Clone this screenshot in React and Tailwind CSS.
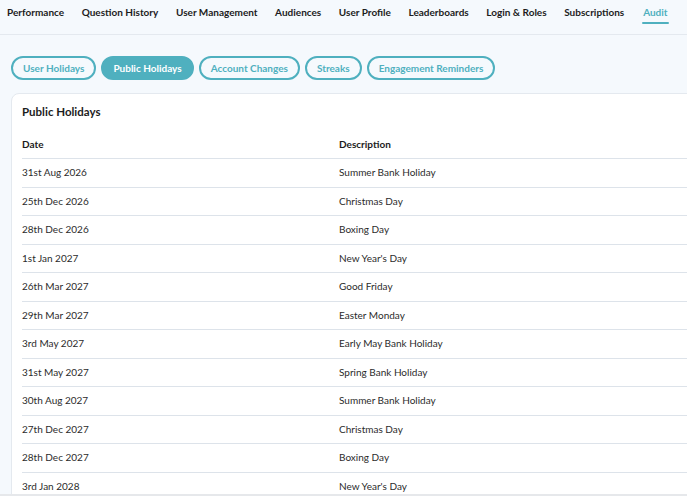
import React from 'react';

const NAV = [
  'Performance',
  'Question History',
  'User Management',
  'Audiences',
  'User Profile',
  'Leaderboards',
  'Login & Roles',
  'Subscriptions',
  'Audit',
];

const TABS = ['User Holidays', 'Public Holidays', 'Account Changes', 'Streaks', 'Engagement Reminders'];

const HOLIDAYS = [
  ['31st Aug 2026', 'Summer Bank Holiday'],
  ['25th Dec 2026', 'Christmas Day'],
  ['28th Dec 2026', 'Boxing Day'],
  ['1st Jan 2027', "New Year's Day"],
  ['26th Mar 2027', 'Good Friday'],
  ['29th Mar 2027', 'Easter Monday'],
  ['3rd May 2027', 'Early May Bank Holiday'],
  ['31st May 2027', 'Spring Bank Holiday'],
  ['30th Aug 2027', 'Summer Bank Holiday'],
  ['27th Dec 2027', 'Christmas Day'],
  ['28th Dec 2027', 'Boxing Day'],
  ['3rd Jan 2028', "New Year's Day"],
];

export default function App() {
  return (
    <div
      className="w-[687px] h-[496px] overflow-hidden bg-[#f5f9fd] text-[#222]"
      style={{ fontFamily: 'Lato, "Noto Sans", sans-serif' }}
    >
      {/* Top nav */}
      <nav className="h-[35px] border-b border-[#e4e9ef] flex items-start gap-[17.6px] px-[7px]">
        {NAV.map((item) => {
          const active = item === 'Audit';
          return (
            <div key={item} className="flex flex-col items-center pt-[5px]">
              <span
                className={`text-[10px] font-bold leading-[14px] whitespace-nowrap ${
                  active ? 'text-[#4fb0bf]' : 'text-[#1c1c1c]'
                }`}
              >
                {item}
              </span>
              {active && <span className="mt-[3px] h-[2px] w-[27px] bg-[#4fb0bf] rounded-full" />}
            </div>
          );
        })}
      </nav>

      {/* Sub tabs */}
      <div className="flex gap-[5px] pl-[11px] pt-[21px]">
        {TABS.map((tab) => {
          const active = tab === 'Public Holidays';
          return (
            <button
              key={tab}
              className={`h-[24px] px-[10px] rounded-full border-2 border-[#4fb0bf] text-[10px] font-bold whitespace-nowrap ${
                active ? 'bg-[#4fb0bf] text-white' : 'bg-transparent text-[#4fb0bf]'
              }`}
            >
              {tab}
            </button>
          );
        })}
      </div>

      {/* Card */}
      <div className="ml-[11px] mt-[13px] w-[700px] bg-white border border-[#e4e9ef] rounded-tl-[8px] pl-[10px]">
        <h2 className="text-[11.5px] font-bold text-[#1c1c1c] pt-[11px] leading-[14px]">Public Holidays</h2>
        <div className="mt-[12px]">
          <div className="flex items-center h-[28px] border-b border-[#dde3ea] text-[10px] font-bold text-[#1c1c1c]">
            <div className="w-[317px]">Date</div>
            <div>Description</div>
          </div>
          {HOLIDAYS.map(([date, desc]) => (
            <div
              key={date}
              className="flex items-center h-[28.5px] border-b border-[#dde3ea] text-[10px] text-[#2b2b2b]"
            >
              <div className="w-[317px]">{date}</div>
              <div>{desc}</div>
            </div>
          ))}
        </div>
      </div>

      <div className="fixed left-0 right-0 bottom-0 h-[2px] bg-[#e6e8eb]" />
    </div>
  );
}
